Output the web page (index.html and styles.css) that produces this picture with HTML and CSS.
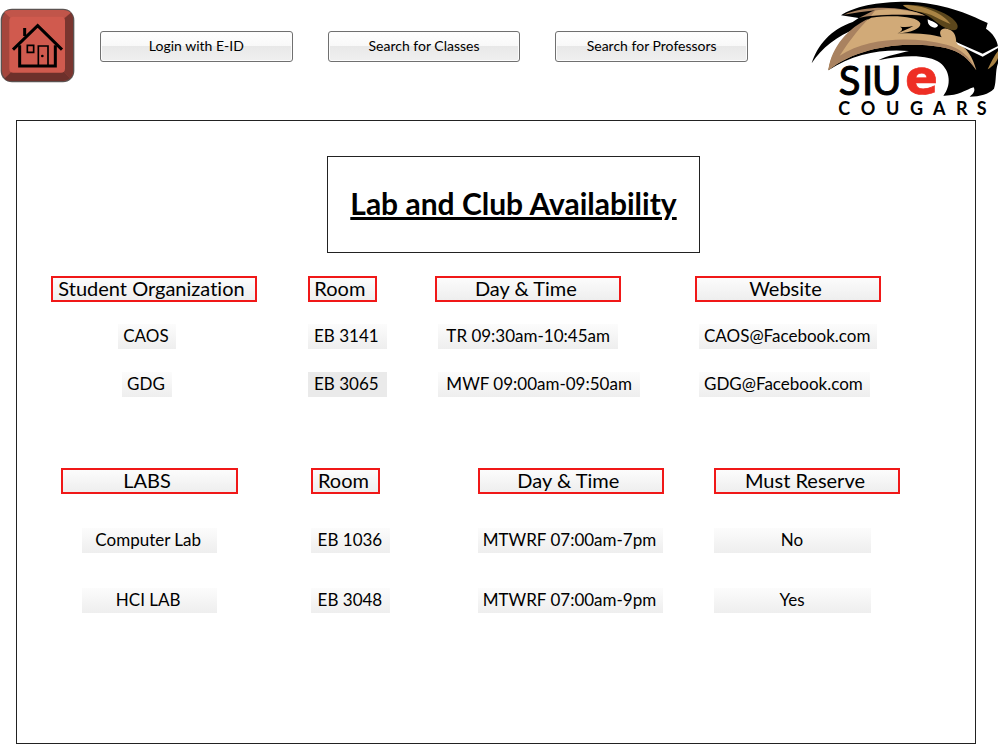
FILE: index.html
```
<!DOCTYPE html>
<html lang="en">
<head>
<meta charset="utf-8">
<meta name="viewport" content="width=device-width, initial-scale=1">
<title>Lab and Club Availability</title>
<link rel="stylesheet" href="styles.css">
</head>
<body>
<header class="topbar">
  <button class="home" type="button" aria-label="Home">
    <svg class="home-icon" viewBox="0 0 225 225" aria-hidden="true">
      <rect x="2" y="2" width="221" height="221" rx="34" fill="#5b5250"/>
      <rect x="6" y="6" width="213" height="213" rx="30" fill="#a5453c"/>
      <path d="M12 12Q20 6 34 6H190Q204 6 213 14L190 32H34Z" fill="#c1554a"/>
      <path d="M213 14Q219 22 219 34V190Q219 204 210 211L192 192V32Z" fill="#7a352f"/>
      <path d="M210 211Q202 219 190 219H34Q20 219 13 212L34 192H192Z" fill="#6d302b"/>
      <rect x="28" y="26" width="167" height="168" rx="12" fill="#d05a4e"/>
      <g fill="none" stroke="#000">
        <path d="M39 125L113 53L186 125" stroke-width="9"/>
        <path d="M59 112V174H166V112" stroke-width="9"/>
        <path d="M74 84V60" stroke-width="9"/>
        <path d="M82 112H101V133H82ZM115 171V114H144V171" stroke-width="5"/>
      </g>
      <circle cx="127" cy="144" r="4"/>
    </svg>
  </button>
  <nav class="actions" aria-label="Main">
    <button class="action" type="button">Login with E-ID</button>
    <button class="action" type="button">Search for Classes</button>
    <button class="action" type="button">Search for Professors</button>
  </nav>
  <svg class="logo" viewBox="0 0 600 354" role="img" aria-label="SIUE Cougars">
    <path d="M35 190C52 136 92 88 158 66L176 54L123 46C160 20 230 5 320 5C430 8 500 40 563 69L558 86C578 99 592 120 594 140V190C585 214 590 245 582 266C566 283 540 289 509 290C522 280 526 271 521 262C495 270 475 288 430 287C455 256 451 212 420 188C390 166 320 162 235 181C263 166 300 160 327 153C250 146 160 160 85 211C95 163 125 115 172 85C110 108 65 145 35 190Z" fill="#000"/>
    <path d="M85 211C98 128 163 78 214 53C280 45 350 48 361 70C363 86 335 97 292 101C360 96 415 108 425 112C414 94 424 83 440 86C465 90 468 111 469 126C500 143 518 170 529 211C507 178 481 155 440 145C350 123 184 130 85 211Z" fill="#d1aa78"/>
    <path d="M85 211C94 138 148 82 205 56C166 98 142 132 119 167C205 111 340 109 440 134C481 145 510 169 529 211C507 178 481 155 440 145C350 123 184 130 85 211Z" fill="#a98260"/>
    <path d="M132 44C195 14 315 17 377 47C300 42 215 44 176 54C196 45 213 35 225 31C195 34 160 40 132 44Z" fill="#a98260"/>
    <path d="M225 32C270 22 332 29 373 46C310 40 250 43 213 47Z" fill="#d1aa78"/>
    <path d="M309 15C380 8 470 48 473 78C474 94 456 93 437 84C405 69 393 45 350 34C335 29 322 28 309 15Z" fill="#5b461c"/>
    <path d="M309 15C372 14 430 41 452 72C420 62 396 39 350 34C335 29 322 28 309 15Z" fill="#a98344"/>
    <path d="M292 101C310 92 325 86 340 78C325 82 312 82 300 80C312 86 305 94 292 101Z" fill="#000"/>
    <path d="M383 58C396 64 409 68 414 76C412 85 401 85 392 79C384 74 383 66 383 58Z" fill="#fff"/>
    <path d="M468 126L548 161L594 138L594 144L548 170L474 134Z" fill="#fff"/>
    <path d="M594 153C582 168 573 188 563 208C579 199 590 185 594 174Z" fill="#a98344"/>
    <text class="logo-name" x="116 186 216" y="284">SIU</text>
    <text class="logo-e" x="315" y="283">e</text>
    <text class="logo-team" x="115 182 258 330 399 468 530" y="344">COUGARS</text>
  </svg>
</header>

<main class="panel">
  <h1 class="title">Lab and Club Availability</h1>

  <table class="schedule clubs">
    <colgroup><col class="c-name"><col class="c-room"><col class="c-time"><col class="c-last"></colgroup>
    <thead>
      <tr>
        <th scope="col"><span class="head head-org">Student Organization</span></th>
        <th scope="col"><span class="head head-room">Room</span></th>
        <th scope="col"><span class="head head-wide">Day &amp; Time</span></th>
        <th scope="col"><span class="head head-wide">Website</span></th>
      </tr>
    </thead>
    <tbody>
      <tr>
        <td><span class="chip">CAOS</span></td>
        <td><span class="chip chip-room">EB 3141</span></td>
        <td><span class="chip chip-time">TR 09:30am-10:45am</span></td>
        <td><span class="chip">CAOS@Facebook.com</span></td>
      </tr>
      <tr>
        <td><span class="chip">GDG</span></td>
        <td><span class="chip chip-room chip-selected">EB 3065</span></td>
        <td><span class="chip chip-time">MWF 09:00am-09:50am</span></td>
        <td><span class="chip">GDG@Facebook.com</span></td>
      </tr>
    </tbody>
  </table>

  <table class="schedule labs">
    <colgroup><col class="c-name"><col class="c-room"><col class="c-time"><col class="c-last"></colgroup>
    <thead>
      <tr>
        <th scope="col"><span class="head head-labs">LABS</span></th>
        <th scope="col"><span class="head head-room">Room</span></th>
        <th scope="col"><span class="head head-wide">Day &amp; Time</span></th>
        <th scope="col"><span class="head head-wide">Must Reserve</span></th>
      </tr>
    </thead>
    <tbody>
      <tr>
        <td><span class="chip chip-lab">Computer Lab</span></td>
        <td><span class="chip chip-room">EB 1036</span></td>
        <td><span class="chip">MTWRF 07:00am-7pm</span></td>
        <td><span class="chip chip-reserve">No</span></td>
      </tr>
      <tr>
        <td><span class="chip chip-lab">HCI LAB</span></td>
        <td><span class="chip chip-room">EB 3048</span></td>
        <td><span class="chip">MTWRF 07:00am-9pm</span></td>
        <td><span class="chip chip-reserve">Yes</span></td>
      </tr>
    </tbody>
  </table>
</main>
</body>
</html>
```
FILE: styles.css
```
*, *::before, *::after { box-sizing: border-box; }

body {
  margin: 0;
  background: #fff;
  color: #000;
  font-family: Lato, "Liberation Sans", sans-serif;
  font-variant-ligatures: none;
}

/* Top bar */
.topbar {
  display: flex;
  align-items: flex-start;
  height: 120px;
}
.home {
  margin: 8px 25px 0 0;
  padding: 0;
  border: 0;
  background: none;
}
.home-icon { display: block; width: 75px; height: 75px; }
.actions {
  display: flex;
  flex: 1;
  gap: 35px;
  max-width: 648px;
  margin-top: 31px;
}
.action {
  flex: 1;
  height: 31px;
  padding: 0 0 2px;
  border: 1px solid #707070;
  border-radius: 3px;
  background: linear-gradient(#fff, #f8f8f8 50%, #e8e8e8 50%, #f0f0f0);
  box-shadow: inset 0 0 0 1px #fcfcfc;
  color: #000;
  font: 14px/20px Lato, "Liberation Sans", sans-serif;
}
.logo { width: 200px; height: 118px; margin-left: auto; }
.logo-name { font: 120px Lato, sans-serif; stroke: #000; stroke-width: 3px; }
.logo-e {
  font: bold 146px "DejaVu Sans", sans-serif;
  fill: #ee2e24;
  stroke: #ee2e24;
  stroke-width: 2px;
}
.logo-team { font: bold 54px Lato, sans-serif; }

/* Content panel */
.panel {
  margin: 0 24px 0 16px;
  padding: 35px 0 95px;
  border: 1px solid #222;
}
.title {
  width: 373px;
  margin: 0 auto 23px 310px;
  padding: 27px 0 29px;
  border: 1px solid #222;
  font-size: 30px;
  line-height: 39px;
  text-align: center;
  text-decoration: underline;
}

/* Schedules */
.schedule {
  table-layout: fixed;
  border-collapse: collapse;
}
.schedule th, .schedule td {
  padding: 0;
  text-align: left;
  vertical-align: top;
  font-weight: normal;
}
.clubs { width: calc(100% - 34px); margin: 0 0 48px 34px; }
.clubs tr { height: 48px; }
.clubs .c-name { width: 27.8%; }
.clubs .c-room { width: 13.8%; }
.clubs .c-time { width: 28.1%; }
.clubs td:first-child { padding-right: 65px; text-align: center; }
.clubs td:nth-child(3) { padding-left: 3px; }
.clubs td:last-child { padding-left: 4px; }

.labs { width: calc(100% - 44px); margin-left: 44px; }
.labs tr { height: 60px; }
.labs .c-name { width: 27.4%; }
.labs .c-room { width: 18.2%; }
.labs .c-time { width: 25.9%; }
.labs td:first-child { padding-right: 74px; text-align: center; }

.head, .chip {
  display: inline-block;
  background: linear-gradient(#fcfcfc, #eee);
  text-align: center;
  white-space: nowrap;
  vertical-align: top;
}
.head {
  padding: 0 9px 2px 4px;
  border: 2px solid #f01818;
  font-size: 20px;
  line-height: 20px;
}
.head-org { width: 206px; }
.head-labs { width: 177px; }
.head-room { width: 69px; }
.head-wide { width: 186px; }
.chip {
  padding: 0 7px 2px 5px;
  font-size: 17px;
  line-height: 23px;
}
.chip-room { width: 79px; }
.chip-time { padding: 0 8px 2px; }
.chip-lab { width: 135px; }
.chip-reserve { width: 157px; }
.chip-selected { background: #eaeaea; }
```
